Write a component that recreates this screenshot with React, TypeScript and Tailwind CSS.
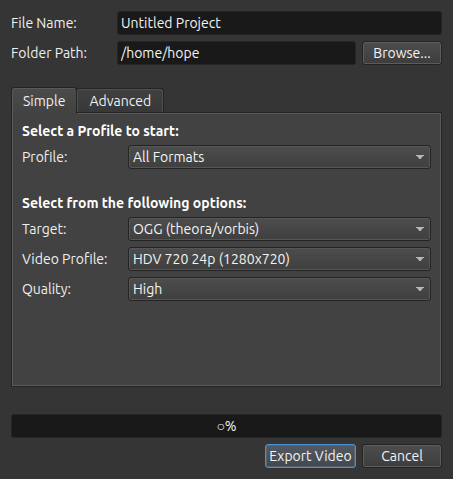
import React, { useState } from 'react';

const FIELD =
  'h-6 min-w-0 rounded-[3px] border border-[#252525] bg-[#191919] px-[3px] text-[#f4f4f4] outline-none';

const BUTTON =
  'h-6 rounded-[3px] border border-[#242424] bg-linear-to-b from-[#4d4d4d] to-[#3d3d3d] text-[#f4f4f4] inset-ring inset-ring-[#5c5c5c]';

type OptionRowProps = {
  id: string;
  label: string;
  options: string[];
};

const OptionRow: React.FC<OptionRowProps> = ({ id, label, options }) => (
  <div className="flex items-center">
    <label htmlFor={id} className="w-[106px] shrink-0">
      {label}
    </label>
    <div className="relative min-w-0 flex-1">
      <select
        id={id}
        className="block h-6 w-full appearance-none rounded-[3px] border border-[#242424] bg-linear-to-b from-[#4d4d4d] to-[#3f3f3f] pr-6 pl-1 text-[#f4f4f4] inset-ring inset-ring-[#565656] outline-none"
      >
        {options.map(option => (
          <option key={option}>{option}</option>
        ))}
      </select>
      <svg
        viewBox="0 0 8 4"
        className="pointer-events-none absolute top-[10px] right-[7px] h-1 w-2 fill-[#b8b8b8]"
      >
        <path d="M0 0h8v1H7L4.6 4H3.4L1 1H0z" />
      </svg>
    </div>
  </div>
);

export default function App() {
  const [tab, setTab] = useState<'simple' | 'advanced'>('simple');
  const [fileName, setFileName] = useState('Untitled Project');
  const [folder, setFolder] = useState('/home/hope');

  const tabClass = (active: boolean) =>
    active
      ? 'relative -mb-[2px] h-[27px] rounded-t-[3px] border border-b-0 border-[#242424] bg-linear-to-b from-[#4b4b4b] to-[#424242] px-[11px] pb-px shadow-[inset_1px_1px_#5a5a5a]'
      : 'h-[24px] rounded-t-[3px] border border-b-0 border-l-0 border-[#242424] bg-linear-to-b from-[#404040] to-[#383838] px-3 shadow-[inset_-1px_1px_#505050,inset_1px_0_#505050]';

  return (
    <div
      className={`flex min-h-screen flex-col bg-[#353535] p-[11px] font-['Ubuntu','Noto_Sans',sans-serif] text-[14px] leading-5 text-[#efefef]`}
    >
      {/* File location */}
      <div className="flex flex-col gap-[6px]">
        <div className="flex items-center">
          <label htmlFor="file-name" className="w-[106px] shrink-0">
            File Name:
          </label>
          <input
            id="file-name"
            className={`${FIELD} flex-1`}
            value={fileName}
            onChange={e => setFileName(e.target.value)}
          />
        </div>
        <div className="flex items-center">
          <label htmlFor="folder-path" className="w-[106px] shrink-0">
            Folder Path:
          </label>
          <input
            id="folder-path"
            className={`${FIELD} flex-1`}
            value={folder}
            onChange={e => setFolder(e.target.value)}
          />
          <button type="button" className={`${BUTTON} ml-[6px] w-20`}>
            Browse...
          </button>
        </div>
      </div>

      {/* Tabs */}
      <div role="tablist" className="mt-[22px] flex items-end">
        <button
          type="button"
          role="tab"
          aria-selected={tab === 'simple'}
          className={tabClass(tab === 'simple')}
          onClick={() => setTab('simple')}
        >
          Simple
        </button>
        <button
          type="button"
          role="tab"
          aria-selected={tab === 'advanced'}
          className={tabClass(tab === 'advanced')}
          onClick={() => setTab('advanced')}
        >
          Advanced
        </button>
      </div>

      <div
        role="tabpanel"
        className="flex-1 border border-[#242424] bg-[#424242] px-[10px] pt-2 pb-4 inset-ring inset-ring-[#5a5a5a]"
      >
        {tab === 'simple' && (
          <>
            <h2 className="font-bold text-white">Select a Profile to start:</h2>
            <div className="mt-1">
              <OptionRow id="profile" label="Profile:" options={['All Formats']} />
            </div>

            <h2 className="mt-6 font-bold text-white">Select from the following options:</h2>
            <div className="mt-1 flex flex-col gap-[6px]">
              <OptionRow id="target" label="Target:" options={['OGG (theora/vorbis)']} />
              <OptionRow id="video-profile" label="Video Profile:" options={['HDV 720 24p (1280x720)']} />
              <OptionRow id="quality" label="Quality:" options={['High', 'Med', 'Low']} />
            </div>
          </>
        )}
      </div>

      {/* Export progress */}
      <div
        role="progressbar"
        aria-valuenow={0}
        className="mt-[27px] flex h-6 items-center justify-center rounded-[3px] border border-[#252525] bg-[#191919] text-[#f4f4f4]"
      >
        ○%
      </div>

      <div className="mt-[6px] flex justify-end gap-[6px]">
        <button
          type="button"
          className="h-6 w-[91px] rounded-[3px] border border-[#4a90d9] bg-linear-to-b from-[#535a63] to-[#414850] whitespace-nowrap text-[#f4f4f4] inset-ring inset-ring-[#59626d]"
        >
          Export Video
        </button>
        <button type="button" className={`${BUTTON} w-20`}>
          Cancel
        </button>
      </div>
    </div>
  );
}
